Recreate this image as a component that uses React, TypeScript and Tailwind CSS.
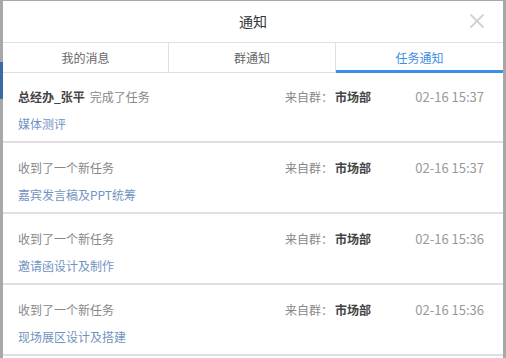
import { X } from "lucide-react"

interface TaskItem {
  who?: string
  action: string
  group: string
  time: string
  task: string
}

const items: TaskItem[] = [
  { who: "总经办_张平", action: "完成了任务", group: "市场部", time: "02-16 15:37", task: "媒体测评" },
  { action: "收到了一个新任务", group: "市场部", time: "02-16 15:37", task: "嘉宾发言稿及PPT统筹" },
  { action: "收到了一个新任务", group: "市场部", time: "02-16 15:36", task: "邀请函设计及制作" },
  { action: "收到了一个新任务", group: "市场部", time: "02-16 15:36", task: "现场展区设计及搭建" },
]

const tabs = ["我的消息", "群通知", "任务通知"]

export default function App() {
  return (
    <div
      className="w-[506px] h-[358px] bg-[#a8a8a8] flex pt-px overflow-hidden"
      style={{ fontFamily: '"Noto Sans CJK SC", "Liberation Sans", sans-serif' }}
    >
      <div className="w-[3px] flex flex-col">
        <div className="h-[61px]" />
        <div className="h-[37px] bg-[#3d69a8]" />
      </div>

      <div className="w-[500px] bg-white flex flex-col">
        <div className="h-[41px] relative flex items-center justify-center">
          <span className="text-[14px] text-[#333]">通知</span>
          <X className="absolute right-[14px] top-[8px] h-[24px] w-[24px] text-[#d2d2d2]" strokeWidth={1.8} />
        </div>

        <div className="grid grid-cols-[166px_167px_167px] border-t border-[#e0e0e0] h-[31px]">
          {tabs.map((t, i) => (
            <div
              key={t}
              className={
                i === 2
                  ? "flex items-center justify-center text-[12px] text-[#3d8ee6] border-b-[3px] border-[#3d8ee6] pt-[2px]"
                  : "flex items-center justify-center text-[12px] text-[#666] border-b border-r border-[#e0e0e0]"
              }
            >
              {t}
            </div>
          ))}
        </div>

        <div className="flex flex-col">
          {items.map((it, i) => (
            <div
              key={i}
              className={
                i === 0
                  ? "h-[70px] border-b-2 border-[#e0e0e0] pl-[15px] pr-[19px] pt-[15px] flex flex-col gap-[9px]"
                  : "h-[71px] border-b-2 border-[#e0e0e0] pl-[15px] pr-[19px] pt-[16px] flex flex-col gap-[9px]"
              }
            >
              <div className="h-[18px] flex items-center text-[12px]">
                <div className="flex-1 text-[#888]">
                  {it.who && <span className="font-bold text-[#444] mr-[5px]">{it.who}</span>}
                  {it.action}
                </div>
                <div className="w-[129px] text-[#888]">
                  来自群：<span className="font-bold text-[#444] ml-[2px]">{it.group}</span>
                </div>
                <div className="text-[#999] text-[13px] w-[70px] text-right">{it.time}</div>
              </div>
              <div className="h-[18px] flex items-center text-[12px] text-[#7393bf]">{it.task}</div>
            </div>
          ))}
        </div>
      </div>

      <div className="w-[3px] bg-[#a8a8a8]" />
    </div>
  )
}
